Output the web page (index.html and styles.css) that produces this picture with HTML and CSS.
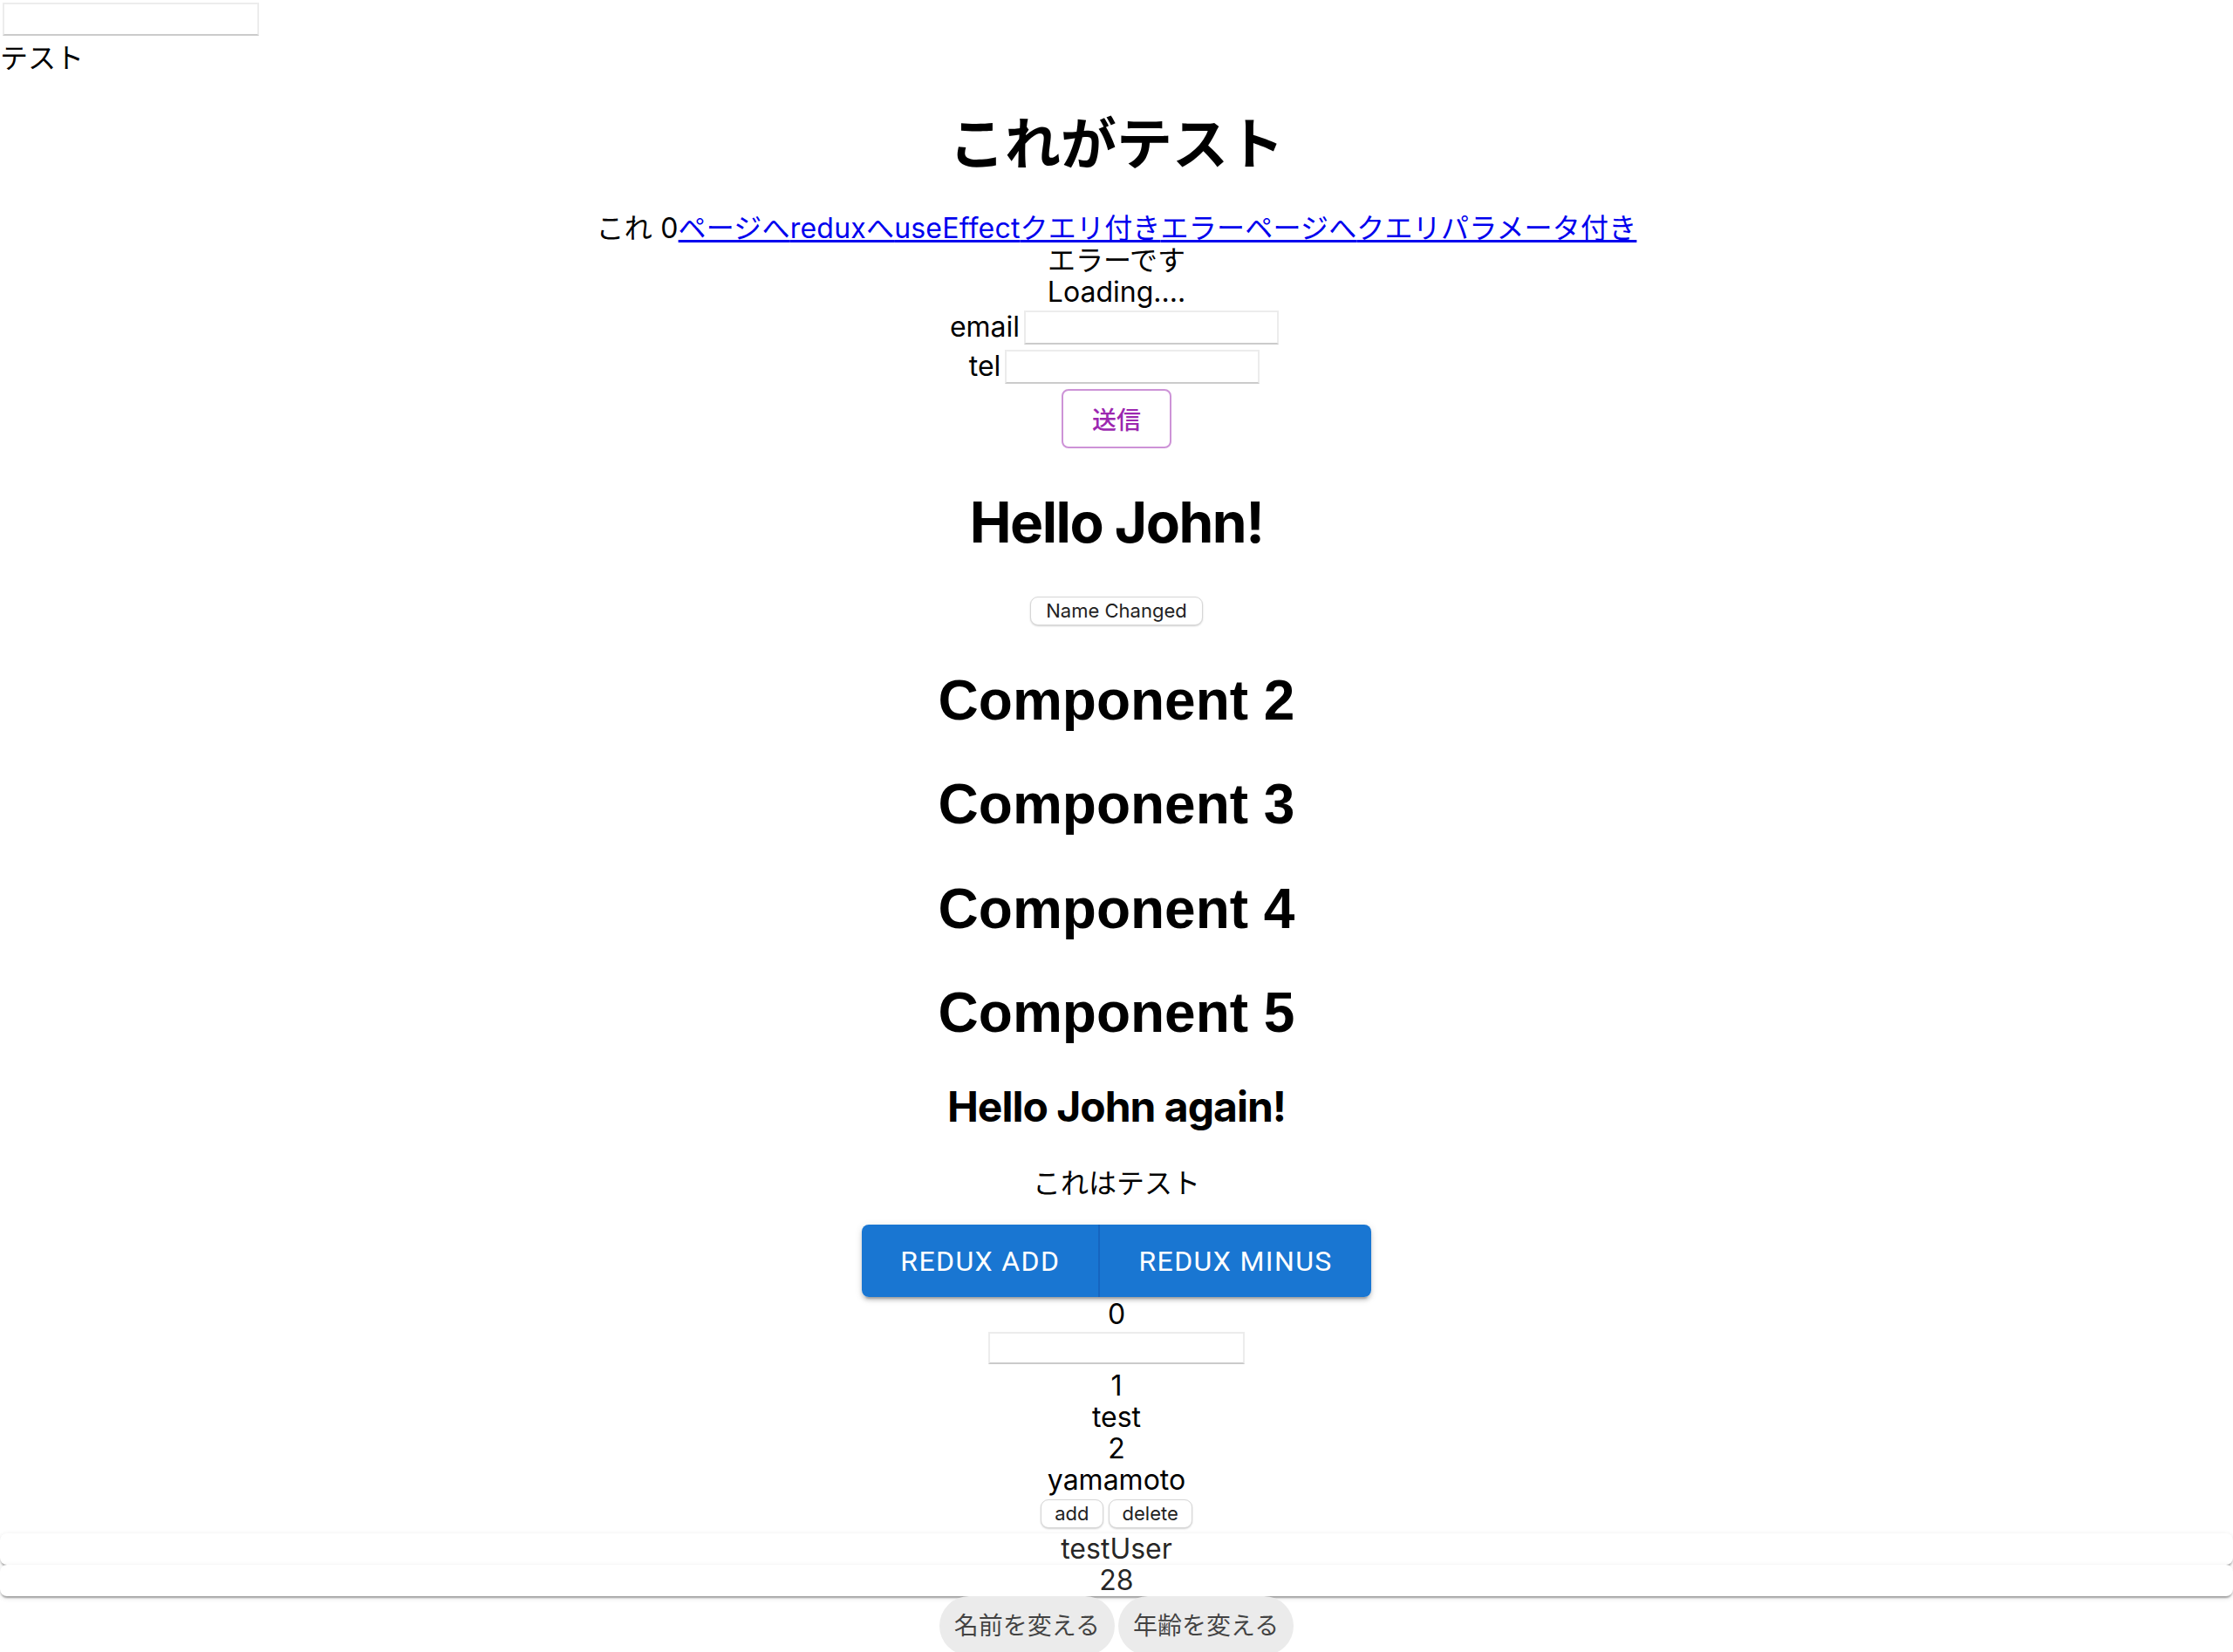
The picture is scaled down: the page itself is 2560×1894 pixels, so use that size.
FILE: index.html
```html
<!DOCTYPE html>
<html lang="ja">
<head>
<meta charset="utf-8">
<title>React App</title>
<link rel="stylesheet" href="styles.css">
</head>
<body>
<div class="app">
  <div class="top-field"><input class="text-input top-input" type="text" aria-label="テスト"></div>
  <div class="top-label">テスト</div>
  <h1 class="title">これがテスト</h1>
  <div class="nav">これ 0<a href="#">ページへ</a><a href="#">reduxへ</a><a href="#">useEffect</a><a href="#">クエリ付き</a><a href="#">エラーページへ</a><a href="#">クエリパラメータ付き</a></div>
  <div class="line">エラーです</div>
  <div class="line">Loading....</div>
  <label class="field-row email-row"><span>email</span><input class="text-input field-input" type="email"></label>
  <label class="field-row tel-row"><span>tel</span><input class="text-input field-input" type="tel"></label>
  <button class="send-btn" type="button">送信</button>
  <h1 class="hello">Hello John!</h1>
  <button class="sys-btn name-btn" type="button">Name Changed</button>
  <h1 class="comp comp-first">Component 2</h1>
  <h1 class="comp">Component 3</h1>
  <h1 class="comp comp-4">Component 4</h1>
  <h1 class="comp">Component 5</h1>
  <h2 class="again">Hello John again!</h2>
  <p class="desc">これはテスト</p>
  <div class="btn-group">
    <button class="group-btn group-first" type="button">Redux add</button>
    <button class="group-btn group-last" type="button">Redux minus</button>
  </div>
  <div class="line count">0</div>
  <input class="text-input mid-input" type="text" aria-label="name">
  <div class="line item-first">1</div>
  <div class="line">test</div>
  <div class="line">2</div>
  <div class="line">yamamoto</div>
  <div class="list-actions">
    <button class="sys-btn" type="button">add</button>
    <button class="sys-btn" type="button">delete</button>
  </div>
  <div class="card-row card-first">testUser</div>
  <div class="card-row card-last">28</div>
  <div class="pill-row">
    <button class="pill" type="button">名前を変える</button>
    <button class="pill pill-last" type="button">年齢を変える</button>
  </div>
</div>
</body>
</html>
```
FILE: styles.css
```css
* {
  box-sizing: border-box;
}

html,
body {
  margin: 0;
  padding: 0;
  background: #ffffff;
}

body {
  font-family: Inter, "Noto Sans CJK JP", sans-serif;
  font-size: 32px;
  line-height: 36px;
  color: #000000;
}

.app {
  display: flex;
  flex-direction: column;
  align-items: center;
  text-align: center;
}

.top-field {
  align-self: stretch;
  height: 46px;
  padding: 3px 0 0 3px;
  text-align: left;
}

.text-input {
  display: block;
  width: 294px;
  height: 38px;
  margin: 0;
  padding: 0 4px;
  border: 2px solid #ececec;
  border-bottom-color: #cbcbcb;
  border-radius: 0;
  background: #ffffff;
  font: inherit;
  outline: none;
}

.top-label {
  align-self: stretch;
  text-align: left;
  font-family: "Noto Sans CJK JP", sans-serif;
}

.title {
  margin: 38px 0 0;
  font-family: "Noto Sans CJK JP", sans-serif;
  font-size: 64px;
  line-height: 80px;
  font-weight: 700;
}

.nav {
  margin-top: 43px;
  line-height: 38px;
  letter-spacing: 0.2px;
}

.nav a {
  color: #0000ee;
  text-decoration: underline;
}

.line {
  line-height: 36px;
}

.field-row {
  display: flex;
  align-items: center;
  justify-content: center;
  gap: 5px;
  padding-right: 5px;
}

.email-row {
  height: 44px;
}

.tel-row {
  height: 46px;
}

.field-input {
  width: 292px;
  height: 39px;
}

.send-btn {
  margin-top: 3px;
  width: 126px;
  height: 68px;
  padding: 0;
  border: 2px solid rgba(156, 39, 176, 0.5);
  border-radius: 8px;
  background: transparent;
  color: #9c27b0;
  font-family: Roboto, "Noto Sans CJK JP", sans-serif;
  font-size: 28px;
  font-weight: 500;
}

.hello {
  margin: 48px 0 0;
  font-size: 64px;
  line-height: 74px;
  font-weight: 700;
  letter-spacing: -1.5px;
}

.sys-btn {
  height: 33px;
  padding: 0 15px;
  border: 1px solid #d6d6d6;
  border-radius: 9px;
  background: #ffffff;
  box-shadow: 0 1px 2px rgba(0, 0, 0, 0.18);
  color: #222222;
  font-family: Inter, sans-serif;
  font-size: 22px;
  line-height: 31px;
}

.name-btn {
  margin-top: 48px;
  padding: 0 17px;
}

.comp {
  margin: 43px 0 0;
  font-family: "Liberation Sans", Arial, sans-serif;
  font-size: 64px;
  line-height: 76px;
  font-weight: 700;
}

.comp-first {
  margin-top: 48px;
}

.comp-4 {
  margin-top: 44px;
}

.again {
  margin: 42px 0 0;
  font-size: 48px;
  line-height: 56px;
  font-weight: 700;
  letter-spacing: -1px;
}

.desc {
  margin: 39px 0 0;
  font-family: "Noto Sans CJK JP", sans-serif;
  line-height: 36px;
}

.btn-group {
  display: flex;
  margin-top: 32px;
  border-radius: 8px;
  box-shadow: 0 6px 2px -4px rgba(0, 0, 0, 0.2), 0 4px 4px 0 rgba(0, 0, 0, 0.14), 0 2px 10px 0 rgba(0, 0, 0, 0.12);
}

.group-btn {
  height: 83px;
  padding: 0 44px;
  border: none;
  background: #1976d2;
  color: #ffffff;
  font-family: Roboto, sans-serif;
  font-size: 32px;
  font-weight: 400;
  letter-spacing: 1.4px;
  text-transform: uppercase;
}

.group-first {
  border-right: 2px solid #1565c0;
  border-radius: 8px 0 0 8px;
}

.group-last {
  border-radius: 0 8px 8px 0;
}

.count {
  margin-top: 2px;
}

.mid-input {
  margin-top: 2px;
  height: 37px;
}

.item-first {
  margin-top: 7px;
}

.list-actions {
  display: flex;
  gap: 6px;
  margin-top: 4px;
}

.card-row {
  align-self: stretch;
  height: 36px;
  line-height: 36px;
  border-radius: 8px;
  background: #ffffff;
  color: rgba(0, 0, 0, 0.87);
  box-shadow: 0 4px 2px -2px rgba(0, 0, 0, 0.2), 0 2px 2px 0 rgba(0, 0, 0, 0.14), 0 2px 6px 0 rgba(0, 0, 0, 0.12);
}

.card-first {
  margin-top: 6px;
}

.pill-row {
  display: flex;
  gap: 4px;
}

.pill {
  height: 68px;
  padding: 0 17px 4px;
  border: none;
  border-radius: 34px;
  background: #ebebeb;
  color: rgba(0, 0, 0, 0.72);
  font-family: "Noto Sans CJK JP", sans-serif;
  font-size: 28px;
}
```
